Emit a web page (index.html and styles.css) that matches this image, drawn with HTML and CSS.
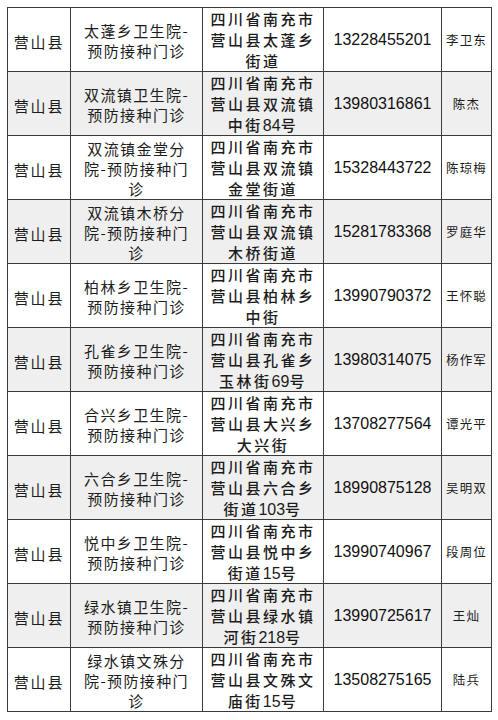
FILE: index.html
```html
<!DOCTYPE html>
<html lang="zh-CN">
<head>
<meta charset="utf-8">
<title>营山县预防接种门诊</title>
<link rel="stylesheet" href="styles.css">
</head>
<body>
<table class="clinics">
  <colgroup>
    <col class="c-county">
    <col class="c-name">
    <col class="c-addr">
    <col class="c-phone">
    <col class="c-person">
  </colgroup>
  <tbody>
    <tr>
      <td class="county">营山县</td>
      <td class="name">太蓬乡卫生院-<br>预防接种门诊</td>
      <td class="addr">四川省南充市<br>营山县太蓬乡<br>街道</td>
      <td class="phone">13228455201</td>
      <td class="person">李卫东</td>
    </tr>
    <tr class="alt">
      <td class="county">营山县</td>
      <td class="name">双流镇卫生院-<br>预防接种门诊</td>
      <td class="addr">四川省南充市<br>营山县双流镇<br>中街<span class="num">84</span>号</td>
      <td class="phone">13980316861</td>
      <td class="person">陈杰</td>
    </tr>
    <tr>
      <td class="county">营山县</td>
      <td class="name">双流镇金堂分<br>院-预防接种门<br>诊</td>
      <td class="addr">四川省南充市<br>营山县双流镇<br>金堂街道</td>
      <td class="phone">15328443722</td>
      <td class="person">陈琼梅</td>
    </tr>
    <tr class="alt">
      <td class="county">营山县</td>
      <td class="name">双流镇木桥分<br>院-预防接种门<br>诊</td>
      <td class="addr">四川省南充市<br>营山县双流镇<br>木桥街道</td>
      <td class="phone">15281783368</td>
      <td class="person">罗庭华</td>
    </tr>
    <tr>
      <td class="county">营山县</td>
      <td class="name">柏林乡卫生院-<br>预防接种门诊</td>
      <td class="addr">四川省南充市<br>营山县柏林乡<br>中街</td>
      <td class="phone">13990790372</td>
      <td class="person">王怀聪</td>
    </tr>
    <tr class="alt">
      <td class="county">营山县</td>
      <td class="name">孔雀乡卫生院-<br>预防接种门诊</td>
      <td class="addr">四川省南充市<br>营山县孔雀乡<br>玉林街<span class="num">69</span>号</td>
      <td class="phone">13980314075</td>
      <td class="person">杨作军</td>
    </tr>
    <tr>
      <td class="county">营山县</td>
      <td class="name">合兴乡卫生院-<br>预防接种门诊</td>
      <td class="addr">四川省南充市<br>营山县大兴乡<br>大兴街</td>
      <td class="phone">13708277564</td>
      <td class="person">谭光平</td>
    </tr>
    <tr class="alt">
      <td class="county">营山县</td>
      <td class="name">六合乡卫生院-<br>预防接种门诊</td>
      <td class="addr">四川省南充市<br>营山县六合乡<br>街道<span class="num">103</span>号</td>
      <td class="phone">18990875128</td>
      <td class="person">吴明双</td>
    </tr>
    <tr>
      <td class="county">营山县</td>
      <td class="name">悦中乡卫生院-<br>预防接种门诊</td>
      <td class="addr">四川省南充市<br>营山县悦中乡<br>街道<span class="num">15</span>号</td>
      <td class="phone">13990740967</td>
      <td class="person">段周位</td>
    </tr>
    <tr class="alt">
      <td class="county">营山县</td>
      <td class="name">绿水镇卫生院-<br>预防接种门诊</td>
      <td class="addr">四川省南充市<br>营山县绿水镇<br>河街<span class="num">218</span>号</td>
      <td class="phone">13990725617</td>
      <td class="person">王灿</td>
    </tr>
    <tr>
      <td class="county">营山县</td>
      <td class="name">绿水镇文殊分<br>院-预防接种门<br>诊</td>
      <td class="addr">四川省南充市<br>营山县文殊文<br>庙街<span class="num">15</span>号</td>
      <td class="phone">13508275165</td>
      <td class="person">陆兵</td>
    </tr>
  </tbody>
</table>
</body>
</html>
```

FILE: styles.css
```css
html, body {
  margin: 0;
  padding: 0;
  background: #ffffff;
}

body {
  font-family: "Noto Sans CJK SC", "Noto Sans", sans-serif;
  color: #1c1c1c;
}

.clinics {
  margin: 7px 0 0 7px;
  width: 485px;
  table-layout: fixed;
  border-collapse: collapse;
}

.c-county { width: 63px; }
.c-name { width: 132px; }
.c-addr { width: 121px; }
.c-phone { width: 118px; }
.c-person { width: 50px; }

.clinics tr {
  height: 64px;
}

.clinics tr.alt {
  background: #efefef;
}

.clinics td {
  border: 1px solid #3a3a3a;
  padding: 0;
  text-align: center;
  vertical-align: middle;
  overflow: hidden;
  white-space: nowrap;
}

.clinics td.county {
  font-size: 15px;
  letter-spacing: 1.8px;
  line-height: 21px;
  padding-top: 4px;
}

.clinics td.name {
  font-size: 15px;
  letter-spacing: 1.4px;
  line-height: 20px;
  padding-top: 3px;
}

.clinics td.addr {
  font-size: 15px;
  letter-spacing: 2.5px;
  line-height: 21px;
  font-weight: 500;
}

.clinics td.addr .num {
  font-family: "Liberation Sans", Arial, sans-serif;
  font-size: 16px;
  line-height: 1;
  font-weight: 400;
  letter-spacing: 0;
}

.clinics td.phone {
  font-family: "Liberation Sans", Arial, sans-serif;
  font-size: 16px;
  color: #111;
}

.clinics td.person {
  font-size: 12.5px;
  letter-spacing: 1.2px;
}
```
